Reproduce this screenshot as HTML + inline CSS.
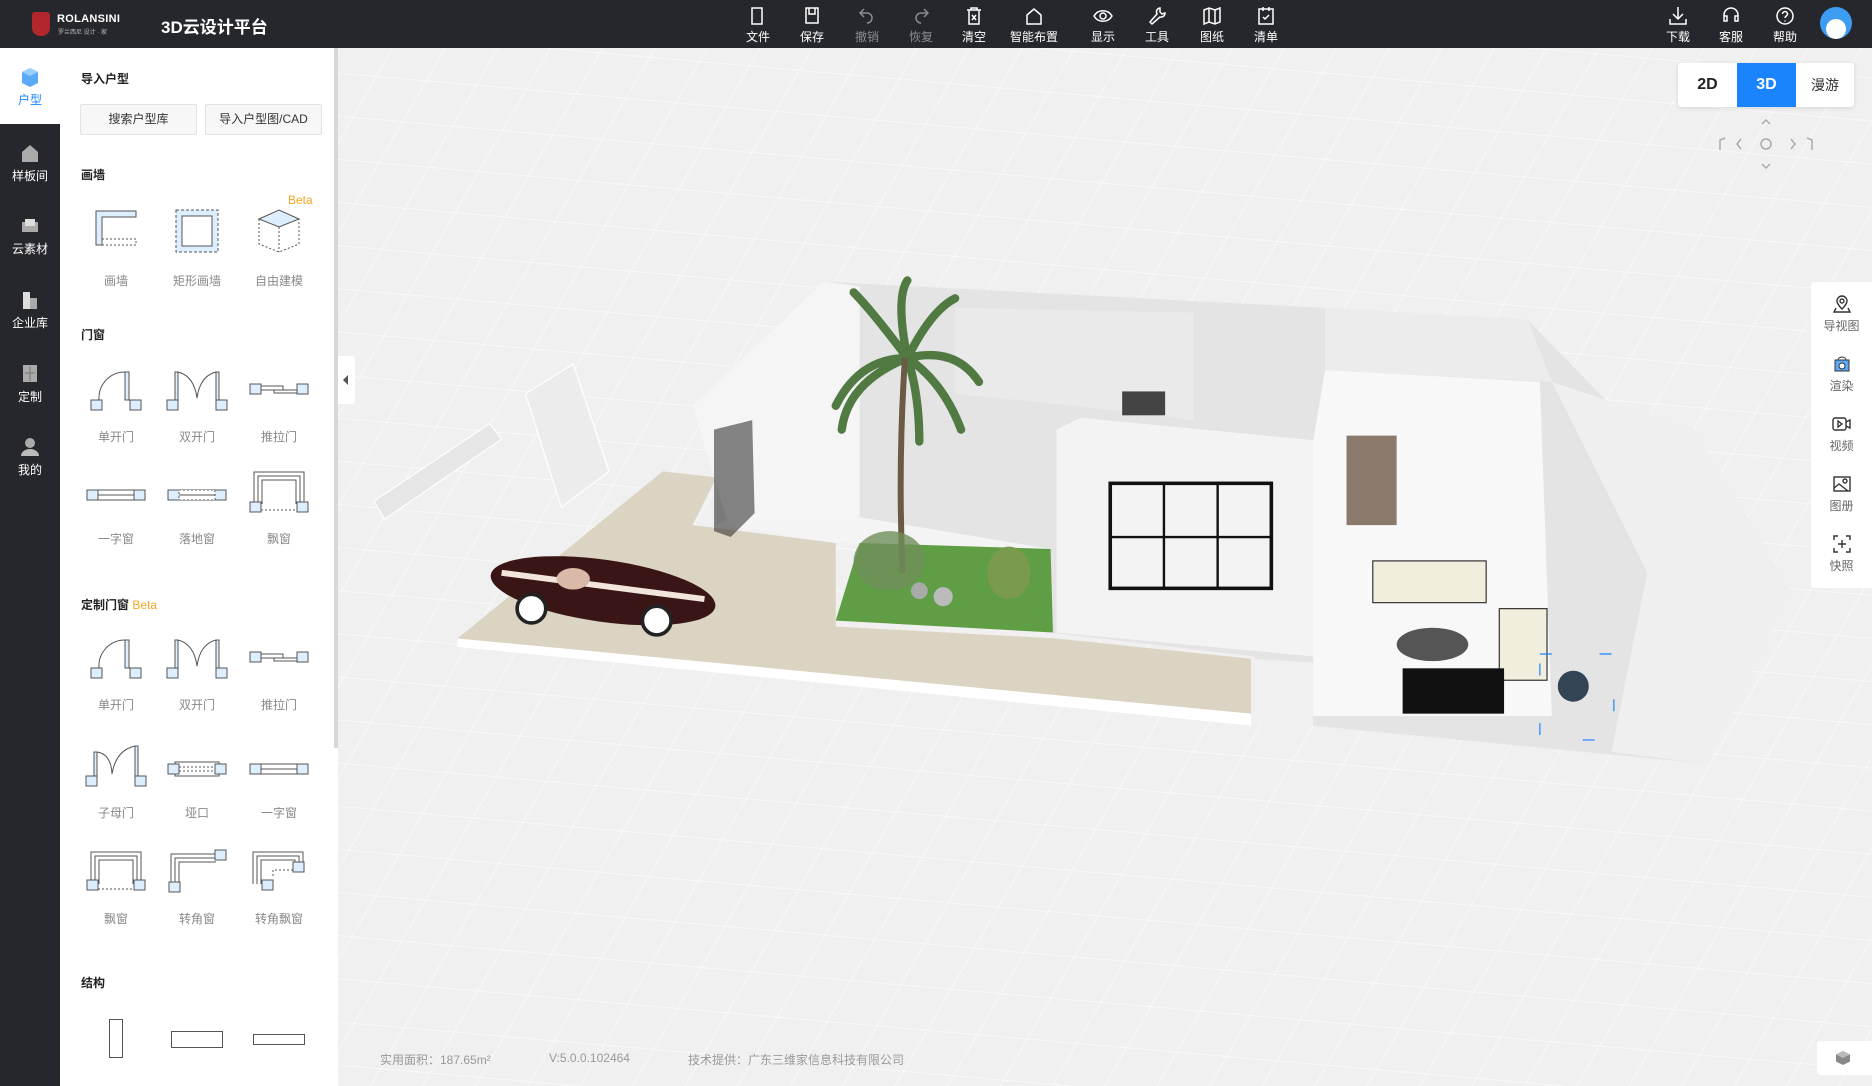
<!DOCTYPE html>
<html><head><meta charset="utf-8"><style>
*{margin:0;padding:0;box-sizing:border-box}
body{width:1872px;height:1086px;overflow:hidden;background:#26272c;font-family:"Liberation Sans","Noto Sans CJK SC",sans-serif;position:relative}
.hdr{position:absolute;left:0;top:0;width:1872px;height:48px;background:#26272c}
.hi{position:absolute;top:5px;width:50px;margin-left:-25px;text-align:center;color:#fff;font-size:12px}
.hi svg{display:block;margin:0 auto 1px}
.hi.dim{color:#8a8b90}
.nav{position:absolute;left:0;top:48px;width:60px;height:1038px;background:#26272c}
.ni{position:absolute;left:0;width:60px;text-align:center;color:#fff;font-size:12px}
.ni svg{display:block;margin:0 auto 3px}
.panel{position:absolute;left:60px;top:48px;width:278px;height:1038px;background:#fff}
.canvas{position:absolute;left:338px;top:48px;width:1534px;height:1038px;background:#f0f0f0;overflow:hidden}
.h{position:absolute;left:21px;font-size:12px;font-weight:bold;color:#222}
.btn{position:absolute;top:56px;height:31px;border:1px solid #e3e3e3;background:#f7f7f7;font-size:12px;color:#333;text-align:center;line-height:29px;border-radius:2px}
.it{position:absolute;width:80px;margin-left:-40px;text-align:center;font-size:12px;color:#888}
.it svg{display:block;margin:0 auto}
.beta{color:#f5a623;font-weight:normal}
</style></head><body>
<div class="hdr">
 <div style="position:absolute;left:32px;top:12px;width:18px;height:24px;background:#b3262c;border-radius:3px 3px 8px 8px"></div>
 <div style="position:absolute;left:57px;top:13px;color:#fff;font-size:11px;font-weight:bold;letter-spacing:.3px">ROLANSINI</div>
 <div style="position:absolute;left:58px;top:27px;color:#bbb;font-size:6px">罗兰西尼 设计 · 家</div>
 <div style="position:absolute;left:161px;top:13px;color:#fff;font-size:17px;font-weight:bold">3D云设计平台</div>
 <div class="hi" style="left:758px"><svg width="22" height="22" viewBox="0 0 22 22" fill="none" stroke="#fff" stroke-width="1.5"><path d="M5 3h10v16H5z"/></svg>文件</div>
 <div class="hi" style="left:812px"><svg width="22" height="22" viewBox="0 0 22 22" fill="none" stroke="#fff" stroke-width="1.5"><rect x="5" y="3" width="12" height="15"/><path d="M8 3v6h6V3"/></svg>保存</div>
 <div class="hi dim" style="left:867px"><svg width="22" height="22" viewBox="0 0 22 22" fill="none" stroke="#8a8b90" stroke-width="1.5"><path d="M8 4L4 8l4 4M4 8h7a5 5 0 010 10"/></svg>撤销</div>
 <div class="hi dim" style="left:921px"><svg width="22" height="22" viewBox="0 0 22 22" fill="none" stroke="#8a8b90" stroke-width="1.5"><path d="M14 4l4 4-4 4M18 8h-7a5 5 0 000 10"/></svg>恢复</div>
 <div class="hi" style="left:974px"><svg width="22" height="22" viewBox="0 0 22 22" fill="none" stroke="#fff" stroke-width="1.5"><path d="M4 5h14M8 5V3h6v2M6 5v14h10V5M9 10l4 5M13 10l-4 5"/></svg>清空</div>
 <div class="hi" style="left:1034px;width:64px;margin-left:-32px"><svg width="22" height="22" viewBox="0 0 22 22" fill="none" stroke="#fff" stroke-width="1.5"><path d="M4 10l7-6 7 6v9H4z"/></svg>智能布置</div>
 <div class="hi" style="left:1103px"><svg width="22" height="22" viewBox="0 0 22 22" fill="none" stroke="#fff" stroke-width="1.5"><path d="M2 11c4-7 14-7 18 0-4 7-14 7-18 0z"/><circle cx="11" cy="11" r="3"/></svg>显示</div>
 <div class="hi" style="left:1157px"><svg width="22" height="22" viewBox="0 0 22 22" fill="none" stroke="#fff" stroke-width="1.5"><path d="M14 3a4 4 0 00-3 6l-7 8 2 2 8-7a4 4 0 005-4l-3 1-2-2z"/></svg>工具</div>
 <div class="hi" style="left:1212px"><svg width="22" height="22" viewBox="0 0 22 22" fill="none" stroke="#fff" stroke-width="1.5"><path d="M3 5l5-2 6 2 5-2v14l-5 2-6-2-5 2zM8 3v14M14 5v14"/></svg>图纸</div>
 <div class="hi" style="left:1266px"><svg width="22" height="22" viewBox="0 0 22 22" fill="none" stroke="#fff" stroke-width="1.5"><rect x="4" y="4" width="14" height="15"/><path d="M8 2v4M14 2v4M8 12l2 2 4-4"/></svg>清单</div>
 <div class="hi" style="left:1678px"><svg width="22" height="22" viewBox="0 0 22 22" fill="none" stroke="#fff" stroke-width="1.5"><path d="M11 2v12M6 9l5 5 5-5M3 14v5h16v-5"/></svg>下载</div>
 <div class="hi" style="left:1731px"><svg width="22" height="22" viewBox="0 0 22 22" fill="none" stroke="#fff" stroke-width="1.5"><path d="M4 13v-3a7 7 0 0114 0v3M4 11h3v5H4zM15 11h3v5h-3z"/></svg>客服</div>
 <div class="hi" style="left:1785px"><svg width="22" height="22" viewBox="0 0 22 22" fill="none" stroke="#fff" stroke-width="1.5"><circle cx="11" cy="11" r="8"/><path d="M8.5 9a2.5 2.5 0 115 0c0 2-2.5 2-2.5 4M11 15.5v1"/></svg>帮助</div>
 <div style="position:absolute;left:1820px;top:7px;width:32px;height:32px;border-radius:50%;background:#3e9cf2;overflow:hidden"><div style="position:absolute;left:6px;top:12px;width:20px;height:20px;border-radius:50%;background:#fff"></div></div>
</div>
<div class="nav">
 <div style="position:absolute;left:0;top:0;width:60px;height:76px;background:#fff"></div>
 <div class="ni" style="top:18px;color:#1a84ff"><svg width="22" height="22" viewBox="0 0 22 22"><path d="M11 2l8 4v11l-8 4-8-4V6z" fill="#5aaaf8"/><path d="M11 2l8 4-8 4-8-4z" fill="#9ad0ff"/></svg>户型</div>
 <div class="ni" style="top:94px"><svg width="22" height="22" viewBox="0 0 22 22"><path d="M3 10l8-7 8 7v10H3z" fill="#aaa"/></svg>样板间</div>
 <div class="ni" style="top:167px"><svg width="22" height="22" viewBox="0 0 22 22"><rect x="3" y="7" width="16" height="10" fill="#aaa"/><rect x="6" y="4" width="10" height="7" fill="#ddd"/></svg>云素材</div>
 <div class="ni" style="top:241px"><svg width="22" height="22" viewBox="0 0 22 22"><rect x="4" y="3" width="7" height="17" fill="#ddd"/><rect x="11" y="9" width="7" height="11" fill="#aaa"/></svg>企业库</div>
 <div class="ni" style="top:315px"><svg width="22" height="22" viewBox="0 0 22 22"><rect x="4" y="2" width="14" height="17" fill="#aaa"/><path d="M11 3v15M6 10h10" stroke="#777"/></svg>定制</div>
 <div class="ni" style="top:388px"><svg width="22" height="22" viewBox="0 0 22 22"><circle cx="11" cy="7" r="5" fill="#aaa"/><path d="M2 20a9 7 0 0118 0z" fill="#bbb"/></svg>我的</div>
</div>
<div class="panel">
 <div class="h" style="top:22px">导入户型</div>
 <div class="btn" style="left:20px;width:117px">搜索户型库</div>
 <div class="btn" style="left:145px;width:117px">导入户型图/CAD</div>
 <div class="h" style="top:118px">画墙</div>
 <div style="position:absolute;left:228px;top:145px;font-size:12px;color:#f5a623">Beta</div>
 <div class="it" style="left:56px;top:158px"><svg width="50" height="50" viewBox="0 0 50 50" fill="#ddeeff" stroke="#555"><path d="M5 5h40v6H11v28H5z"/><path d="M11 33h34v6H11" fill="none" stroke-dasharray="2 2"/></svg><div style="margin-top:16px">画墙</div></div>
 <div class="it" style="left:137px;top:158px"><svg width="50" height="50" viewBox="0 0 50 50" fill="#ddeeff" stroke="#555"><rect x="4" y="4" width="42" height="42" stroke-dasharray="3 2"/><rect x="10" y="10" width="30" height="30" fill="#fff"/></svg><div style="margin-top:16px">矩形画墙</div></div>
 <div class="it" style="left:219px;top:158px"><svg width="50" height="50" viewBox="0 0 50 50" fill="none" stroke="#555"><path d="M5 13l20-9 20 9-20 8z" fill="#ddeeff"/><path d="M5 13v25l20 8 20-8V13M25 21v25" stroke-dasharray="2 2"/></svg><div style="margin-top:16px">自由建模</div></div>
 <div class="h" style="top:278px">门窗</div>
 <div class="it" style="left:56px;top:318px"><svg width="58" height="48" viewBox="0 0 58 48" fill="#ddeeff" stroke="#555"><path d="M12 34A26 26 0 0138 6" fill="none"/><rect x="38" y="6" width="4" height="28"/><rect x="4" y="34" width="11" height="10"/><rect x="43" y="34" width="11" height="10"/></svg><div style="margin-top:14px">单开门</div></div>
 <div class="it" style="left:137px;top:318px"><svg width="66" height="48" viewBox="0 0 66 48" fill="#ddeeff" stroke="#555"><rect x="11" y="6" width="3" height="28"/><rect x="52" y="6" width="3" height="28"/><path d="M14 6q16 4 19 26q3-22 19-26" fill="none"/><rect x="3" y="34" width="11" height="10"/><rect x="52" y="34" width="11" height="10"/></svg><div style="margin-top:14px">双开门</div></div>
 <div class="it" style="left:219px;top:318px"><svg width="62" height="48" viewBox="0 0 62 48" fill="#ddeeff" stroke="#555"><rect x="2" y="18" width="11" height="10"/><rect x="49" y="18" width="11" height="10"/><path d="M13 20h22v4H13zM26 24h23v3H26z" fill="#fff"/></svg><div style="margin-top:14px">推拉门</div></div>
 <div class="it" style="left:56px;top:428px"><svg width="62" height="40" viewBox="0 0 62 40" fill="#ddeeff" stroke="#555"><rect x="2" y="14" width="58" height="10"/><rect x="13" y="14" width="36" height="10" fill="#fff"/><path d="M13 19h36"/></svg><div style="margin-top:14px">一字窗</div></div>
 <div class="it" style="left:137px;top:428px"><svg width="62" height="40" viewBox="0 0 62 40" fill="#ddeeff" stroke="#555"><rect x="2" y="14" width="58" height="10"/><rect x="13" y="14" width="36" height="10" fill="#fff" stroke-dasharray="2 2"/><path d="M13 19h36"/></svg><div style="margin-top:14px">落地窗</div></div>
 <div class="it" style="left:219px;top:420px"><svg width="62" height="48" viewBox="0 0 62 48" fill="none" stroke="#555"><path d="M6 36V4h50v32M10 36V8h42v28M14 36V12h34v24"/><rect x="2" y="34" width="11" height="10" fill="#ddeeff"/><rect x="49" y="34" width="11" height="10" fill="#ddeeff"/><path d="M13 42h36" stroke-dasharray="2 2"/></svg><div style="margin-top:14px">飘窗</div></div>
 <div class="h" style="top:548px">定制门窗 <span class="beta">Beta</span></div>
 <div class="it" style="left:56px;top:586px"><svg width="58" height="48" viewBox="0 0 58 48" fill="#ddeeff" stroke="#555"><path d="M12 34A26 26 0 0138 6" fill="none"/><rect x="38" y="6" width="4" height="28"/><rect x="4" y="34" width="11" height="10"/><rect x="43" y="34" width="11" height="10"/></svg><div style="margin-top:14px">单开门</div></div>
 <div class="it" style="left:137px;top:586px"><svg width="66" height="48" viewBox="0 0 66 48" fill="#ddeeff" stroke="#555"><rect x="11" y="6" width="3" height="28"/><rect x="52" y="6" width="3" height="28"/><path d="M14 6q16 4 19 26q3-22 19-26" fill="none"/><rect x="3" y="34" width="11" height="10"/><rect x="52" y="34" width="11" height="10"/></svg><div style="margin-top:14px">双开门</div></div>
 <div class="it" style="left:219px;top:586px"><svg width="62" height="48" viewBox="0 0 62 48" fill="#ddeeff" stroke="#555"><rect x="2" y="18" width="11" height="10"/><rect x="49" y="18" width="11" height="10"/><path d="M13 20h22v4H13zM26 24h23v3H26z" fill="#fff"/></svg><div style="margin-top:14px">推拉门</div></div>
 <div class="it" style="left:56px;top:694px"><svg width="64" height="48" viewBox="0 0 64 48" fill="#ddeeff" stroke="#555"><rect x="10" y="10" width="3" height="24"/><rect x="51" y="4" width="3" height="30"/><path d="M13 10q14 2 15 22q4-24 23-28" fill="none"/><rect x="2" y="34" width="11" height="10"/><rect x="51" y="34" width="11" height="10"/></svg><div style="margin-top:14px">子母门</div></div>
 <div class="it" style="left:137px;top:702px"><svg width="62" height="40" viewBox="0 0 62 40" fill="#ddeeff" stroke="#555"><rect x="9" y="12" width="44" height="14" fill="#fff"/><rect x="2" y="14" width="11" height="10"/><rect x="49" y="14" width="11" height="10"/><path d="M13 17h36M13 21h36" stroke-dasharray="2 2"/></svg><div style="margin-top:14px">垭口</div></div>
 <div class="it" style="left:219px;top:702px"><svg width="62" height="40" viewBox="0 0 62 40" fill="#ddeeff" stroke="#555"><rect x="2" y="14" width="58" height="10"/><rect x="13" y="14" width="36" height="10" fill="#fff"/><path d="M13 19h36"/></svg><div style="margin-top:14px">一字窗</div></div>
 <div class="it" style="left:56px;top:800px"><svg width="62" height="48" viewBox="0 0 62 48" fill="none" stroke="#555"><path d="M6 36V4h50v32M10 36V8h42v28M14 36V12h34v24"/><rect x="2" y="32" width="11" height="10" fill="#ddeeff"/><rect x="49" y="32" width="11" height="10" fill="#ddeeff"/><path d="M13 41h36" stroke-dasharray="2 2"/></svg><div style="margin-top:14px">飘窗</div></div>
 <div class="it" style="left:137px;top:800px"><svg width="62" height="48" viewBox="0 0 62 48" fill="none" stroke="#555"><path d="M5 36V6h45M9 36V10h41M13 36V14h37"/><rect x="49" y="2" width="11" height="10" fill="#ddeeff"/><rect x="3" y="34" width="11" height="10" fill="#ddeeff"/></svg><div style="margin-top:14px">转角窗</div></div>
 <div class="it" style="left:219px;top:800px"><svg width="62" height="48" viewBox="0 0 62 48" fill="none" stroke="#555"><path d="M5 36V4h50v12M9 36V8h42v8M13 36V12h34v4"/><rect x="45" y="14" width="11" height="10" fill="#ddeeff"/><rect x="14" y="32" width="11" height="10" fill="#ddeeff"/><path d="M25 28v-6h20" stroke-dasharray="2 2"/></svg><div style="margin-top:14px">转角飘窗</div></div>
 <div class="h" style="top:926px">结构</div>
 <div style="position:absolute;left:49px;top:971px;width:14px;height:39px;border:1px solid #555"></div>
 <div style="position:absolute;left:111px;top:983px;width:52px;height:17px;border:1px solid #555"></div>
 <div style="position:absolute;left:193px;top:986px;width:52px;height:11px;border:1px solid #555"></div>
 <div style="position:absolute;left:274px;top:0;width:4px;height:700px;background:#d8d8d8"></div>
</div>
<div class="canvas">
 <svg style="position:absolute;left:-338px;top:-48px" width="1872" height="1086" viewBox="0 0 1568 910">
  <defs><pattern id="g" width="42" height="36" patternUnits="userSpaceOnUse" patternTransform="rotate(5) skewX(-25)"><path d="M0 0H42M0 0V36" stroke="#fafafa" stroke-width="1.4" fill="none"/></pattern></defs>
  <rect x="0" y="0" width="1568" height="910" fill="url(#g)"/>
  <polygon points="313,420 410,355 420,368 322,435" fill="#e6e6e6" stroke="#fff"/>
  <polygon points="440,330 480,305 510,395 470,425" fill="#ececec" stroke="#fff"/>
  <polygon points="383,535 555,395 600,400 580,440 700,455 700,525 885,535 1048,552 1048,605 383,540" fill="#dcd4c2"/>
  <polygon points="383,535 1048,598 1048,608 383,542" fill="#fff"/>
  <polygon points="580,340 690,236 1110,258 1280,268 1500,495 1430,640 1100,608 1050,550 880,530 880,460 700,455 600,440 600,400" fill="#e4e4e4"/>
  <polygon points="600,440 640,420 880,460 700,455" fill="#f4f4f4"/>
  <polygon points="700,520 720,455 880,460 882,530" fill="#5f9e44"/>
  <polygon points="580,340 690,236 720,240 720,440 610,440" fill="#f5f5f5"/>
  <polygon points="885,360 905,350 1112,370 1100,550 885,530" fill="#f3f3f3"/>
  <polygon points="1100,370 1110,310 1290,320 1300,600 1100,600" fill="#f8f8f8"/>
  <polygon points="1110,258 1280,268 1300,320 1110,310" fill="#ececec"/>
  <polygon points="800,258 1000,262 1000,352 900,340 800,330" fill="#eaeaea"/>
  <polygon points="1300,320 1420,360 1500,495 1430,640 1350,630 1380,480" fill="#efefef"/>
  <polygon points="1048,552 1100,555 1100,608 1048,605" fill="#f0f0f0"/>
  <rect x="930" y="405" width="135" height="88" fill="none" stroke="#111" stroke-width="3"/>
  <path d="M930 450h135M975 405v88M1020 405v88" stroke="#111" stroke-width="2"/>
  <rect x="1128" y="365" width="42" height="75" fill="#8a7a6c"/>
  <rect x="940" y="328" width="36" height="20" fill="#444"/>
  <polygon points="598,360 630,352 632,430 612,450 598,445" fill="#222" opacity=".55"/>
  <g stroke="#3f6e30" stroke-width="7" fill="none" stroke-linecap="round" opacity=".9">
   <path d="M760 300q-30-40-45-55M760 300q-10-50 0-65M760 300q20-40 40-50M760 300q40-10 60 20M760 300q-40 0-60 40M760 300q30 20 45 60M760 300q-50 20-55 60M760 300q10 30 10 70"/>
  </g>
  <path d="M758 300q-6 90 -2 180" stroke="#6b5a45" stroke-width="5" fill="none"/>
  <ellipse cx="745" cy="470" rx="30" ry="25" fill="#6f8f5a" opacity=".8"/>
  <ellipse cx="845" cy="480" rx="18" ry="22" fill="#7a9a4e"/>
  <circle cx="790" cy="500" r="8" fill="#bbb"/><circle cx="770" cy="495" r="7" fill="#aaa"/>
  <ellipse cx="505" cy="495" rx="95" ry="26" fill="#3a1515" transform="rotate(8 505 495)"/>
  <path d="M420 480l170 22" stroke="#f2e6dc" stroke-width="5"/>
  <ellipse cx="480" cy="485" rx="14" ry="9" fill="#d9b9a8"/>
  <circle cx="445" cy="510" r="12" fill="#fff" stroke="#222" stroke-width="3"/>
  <circle cx="550" cy="520" r="12" fill="#fff" stroke="#222" stroke-width="3"/>
  <rect x="1150" y="470" width="95" height="35" fill="#f2eedd" stroke="#333"/>
  <rect x="1256" y="510" width="40" height="60" fill="#f2eedd" stroke="#333"/>
  <ellipse cx="1200" cy="540" rx="30" ry="14" fill="#555"/>
  <rect x="1175" y="560" width="85" height="38" fill="#111"/>
  <rect x="1290" y="548" width="62" height="72" fill="none" stroke="#1a84ff" stroke-dasharray="10 40"/>
  <circle cx="1318" cy="575" r="13" fill="#345"/>
 </svg>
 <div style="position:absolute;left:1340px;top:15px;width:176px;height:44px;background:#fff;border-radius:3px;box-shadow:0 1px 4px rgba(0,0,0,.12);font-size:16px;font-weight:bold;display:flex">
  <div style="width:59px;text-align:center;line-height:44px;color:#222">2D</div>
  <div style="width:59px;text-align:center;line-height:44px;color:#fff;background:#1a84ff">3D</div>
  <div style="width:58px;text-align:center;line-height:44px;color:#333;font-weight:normal;font-size:14px">漫游</div>
 </div>
 <svg style="position:absolute;left:1378px;top:68px" width="100" height="54" fill="none" stroke="#aaa" stroke-width="1.5"><path d="M46 8l4-4 4 4M46 48l4 4 4-4M25 23l-4 5 4 5M75 23l4 5-4 5"/><circle cx="50" cy="28" r="5"/><path d="M4 34v-10l5-2M96 34v-10l-5-2"/></svg>
 <div style="position:absolute;left:1473px;top:234px;width:61px;height:306px;background:#fff;border-radius:3px 0 0 3px;font-size:12px;color:#666;text-align:center">
  <div style="position:absolute;top:12px;width:61px"><svg width="20" height="20" viewBox="0 0 20 20" fill="none" stroke="#333" stroke-width="1.4"><path d="M10 15s-5-5-5-8a5 5 0 0110 0c0 3-5 8-5 8z"/><circle cx="10" cy="7" r="2"/><path d="M4 14l-2 4h16l-2-4"/></svg><br>导视图</div>
  <div style="position:absolute;top:72px;width:61px"><svg width="20" height="20" viewBox="0 0 20 20"><rect x="3" y="6" width="14" height="11" fill="#5aaaf8" stroke="#333"/><circle cx="10" cy="12" r="3" fill="#fff" stroke="#333"/><path d="M6 6a4 3 0 018 0" fill="none" stroke="#333"/></svg><br>渲染</div>
  <div style="position:absolute;top:132px;width:61px"><svg width="22" height="20" viewBox="0 0 22 20" fill="none" stroke="#333" stroke-width="1.4"><rect x="2" y="4" width="13" height="12" rx="2"/><path d="M15 8l4-2v8l-4-2M7 7v6l4-3z"/></svg><br>视频</div>
  <div style="position:absolute;top:192px;width:61px"><svg width="20" height="20" viewBox="0 0 20 20" fill="none" stroke="#333" stroke-width="1.4"><rect x="2" y="3" width="16" height="14"/><circle cx="13" cy="7" r="2"/><path d="M2 14l5-4 9 7"/></svg><br>图册</div>
  <div style="position:absolute;top:252px;width:61px"><svg width="20" height="20" viewBox="0 0 20 20" fill="none" stroke="#333" stroke-width="1.4"><path d="M2 6V2h4M14 2h4v4M18 14v4h-4M6 18H2v-4M10 6v8M6 10h8"/></svg><br>快照</div>
 </div>
 <div style="position:absolute;left:42px;top:1003px;font-size:12px;color:#999">实用面积：187.65m²</div>
 <div style="position:absolute;left:211px;top:1003px;font-size:12px;color:#999">V:5.0.0.102464</div>
 <div style="position:absolute;left:350px;top:1003px;font-size:12px;color:#999">技术提供：广东三维家信息科技有限公司</div>
 <div style="position:absolute;left:1479px;top:993px;width:55px;height:34px;background:#fff;border-radius:3px 0 0 3px"><svg style="margin:9px 0 0 18px" width="16" height="16" viewBox="0 0 16 16"><path d="M8 1l7 3.5v7L8 15l-7-3.5v-7z" fill="#888"/><path d="M8 1l7 3.5L8 8 1 4.5z" fill="#bbb"/></svg></div>
</div>
<div style="position:absolute;left:338px;top:356px;width:17px;height:48px;background:#fff;border-radius:0 3px 3px 0"><div style="margin:19px 0 0 5px;width:0;height:0;border-top:5px solid transparent;border-bottom:5px solid transparent;border-right:5px solid #555"></div></div>
</body></html>
